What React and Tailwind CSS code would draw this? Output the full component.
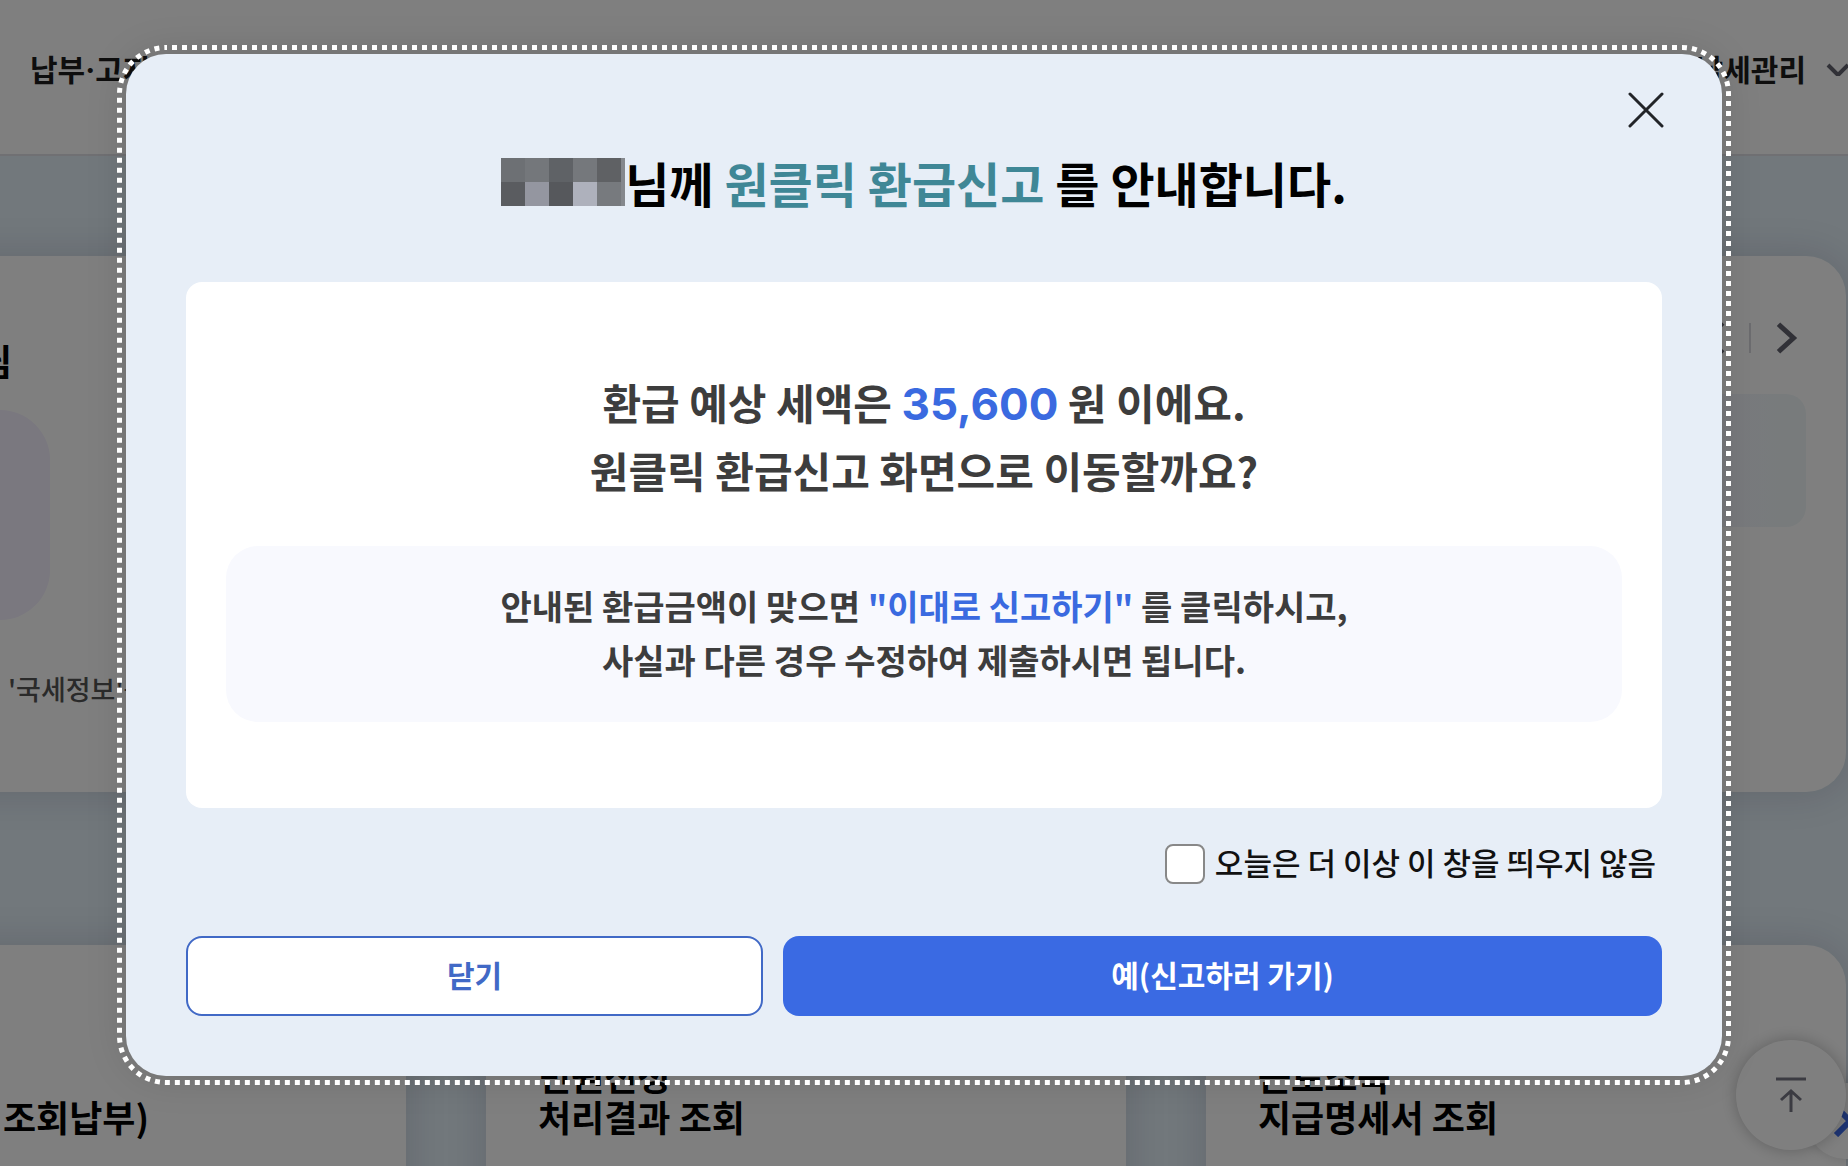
import { useState } from 'react'

const CARD = 'bg-white rounded-[40px] shadow-[0_0_40px_rgba(30,20,60,0.16)]'

const services = [
  { id: 'pay', lines: ['조회납부)'], className: 'pl-[237px] pt-[151px]' },
  { id: 'civil', lines: ['민원신청', '처리결과 조회'], className: 'pl-[52px] pt-[110px]' },
  { id: 'income', lines: ['근로소득', '지급명세서 조회'], className: 'pl-[52px] pt-[110px]' },
]

function Chevron({ d, className, strokeWidth = 4 }) {
  return (
    <svg viewBox="0 0 24 32" className={className} fill="none" stroke="currentColor" strokeWidth={strokeWidth} aria-hidden="true">
      <path d={d} />
    </svg>
  )
}

function Header() {
  return (
    <header className="flex h-[156px] items-start justify-between border-b-2 border-[#e0e0e6] bg-white pt-[46px] pl-[30px] text-[30px] leading-[44px] font-bold text-[#1c1c1c]">
      <a href="#pay">납부<span className="font-['Inter',sans-serif]">·</span>고지<span className="font-['Inter',sans-serif]">·</span>환급</a>
      <a href="#manage" className="flex items-center">
        납세관리
        <svg viewBox="0 0 24 16" className="-mr-[2px] ml-[20px] h-4 w-6 text-[#62636f]" fill="none" stroke="currentColor" strokeWidth="4" aria-hidden="true">
          <path d="M2 5 L12 15 L22 5" />
        </svg>
      </a>
    </header>
  )
}

function Background() {
  return (
    <div className="h-screen overflow-hidden bg-[#e4f0f8]">
      <Header />
      <main className="flex justify-end pt-[100px] pr-[2px]">
        <div className="flex w-[2080px] shrink-0 flex-col gap-[153px]">
          <section className="flex h-[536px] gap-20">
            <div className={`${CARD} flex-1`}>
              <p className="w-[246px] pt-[77px] text-right text-[36px] leading-[54px] font-bold">님</p>
              <div className="mt-[23px] h-[210px] w-[284px] rounded-[50px] bg-[#f4f0fe]"></div>
              <p className="mt-[49px] pl-[242px] text-[27px] leading-[40px] font-medium text-[#555]">'국세정보'를</p>
            </div>
            <div className={`${CARD} flex-1 px-[40px] pt-[62px]`}>
              <div className="flex items-center justify-end pr-1 text-[#62636f]">
                <button type="button" aria-label="이전"><Chevron d="M19 4 L6 16 L19 28" className="h-10 w-8" /></button>
                <span className="mx-[19px] h-[30px] w-[2px] bg-[#d8d8de]"></span>
                <button type="button" aria-label="다음"><Chevron d="M6 5 L18 16 L6 27" className="h-10 w-8" /></button>
              </div>
              <div className="mt-[36px] h-[133px] rounded-[20px] bg-linear-to-r from-[#f4f3fe] from-85% to-[#f0f7f8]"></div>
            </div>
          </section>
          <section className="grid grid-cols-3 gap-20">
            {services.map(s => (
              <a key={s.id} href={`#${s.id}`} className={`${CARD} ${s.className} h-[320px] text-[36px] leading-[41px] font-bold`}>
                {s.lines.map(l => <span key={l} className="block">{l}</span>)}
              </a>
            ))}
          </section>
        </div>
      </main>

      {/* Floating buttons */}
      <button type="button" aria-label="다음 서비스" className="absolute right-[-35px] bottom-[7px] flex h-[76px] w-[76px] items-center justify-center rounded-full bg-white text-[#3d6be8] shadow-[0_0_12px_rgba(0,0,0,0.15)]">
        <Chevron d="M3 2 L17 16 L3 30" strokeWidth={6} className="h-8 w-6" />
      </button>
      <button type="button" aria-label="맨 위로" className="absolute right-[2px] bottom-[16px] flex h-[110px] w-[110px] items-center justify-center rounded-full bg-white text-[#777784] shadow-[0_0_16px_rgba(0,0,0,0.25)]">
        <svg viewBox="0 0 32 36" className="h-9 w-8" fill="none" stroke="currentColor" strokeWidth="3" aria-hidden="true">
          <path d="M1 2 H31 M16 35 V14 M6 23 L16 14 L26 23" />
        </svg>
      </button>
    </div>
  )
}

// Dotted ring drawn just outside the dialog
function FocusRing() {
  return (
    <svg className="pointer-events-none absolute -top-[9px] -left-[9px] h-[calc(100%+18px)] w-[calc(100%+18px)]" aria-hidden="true">
      <rect
        x="2.5"
        y="2.5"
        rx="46.5"
        className="h-[calc(100%-5px)] w-[calc(100%-5px)]"
        fill="none"
        stroke="#fff"
        strokeWidth="5"
        strokeDasharray="5 5"
        strokeDashoffset="4"
      />
    </svg>
  )
}

function HiddenName() {
  const cells = ['#6d7074', '#74777b', '#5f6266', '#75787c', '#5f6164', '#5a5c60', '#9496a0', '#56585c', '#aeb1bc', '#777a7e']
  return (
    <svg viewBox="0 0 124 48" className="h-12 w-[124px]" shapeRendering="crispEdges" aria-hidden="true">
      <rect width="124" height="48" fill="#85888d" />
      {cells.map((c, i) => (
        <rect key={i} x={(i % 5) * 24} y={i < 5 ? 0 : 24} width="24" height="24" fill={c} />
      ))}
    </svg>
  )
}

export default function App() {
  const [hideToday, setHideToday] = useState(false)

  return (
    <div className="relative overflow-hidden font-['Noto_Sans_CJK_KR',sans-serif]">
      <Background />

      <div className="absolute inset-0 flex items-start justify-center bg-black/50 px-[126px] pt-[54px]">
        <div
          role="dialog"
          aria-modal="true"
          aria-labelledby="refund-title"
          className="relative w-full rounded-[40px] bg-[#e7eef7] px-[60px] pt-[88px] pb-[60px] shadow-[0_0_40px_rgba(0,0,0,0.15)]"
        >
          <FocusRing />
          <button type="button" aria-label="닫기" className="absolute top-[38px] right-[58px] p-0">
            <svg viewBox="0 0 36 36" className="h-9 w-9" fill="none" stroke="#222428" strokeWidth="3" strokeLinecap="round" aria-hidden="true">
              <path d="M2 2 L34 34 M34 2 L2 34" />
            </svg>
          </button>

          <h1 id="refund-title" className="flex items-center justify-center text-[48px] leading-[80px] font-bold text-black">
            <HiddenName />
            <span>님께 <span className="text-[#3f8796]">원클릭 환급신고</span> 를 안내합니다.</span>
          </h1>

          <div className="mt-[60px] rounded-2xl bg-white px-10 pt-[86px] pb-[86px] text-center font-bold text-[#3d3d3d]">
            <p className="text-[42px] leading-[68px]">
              환급 예상 세액은 <strong className="font-['Inter',sans-serif] text-[44px] leading-none font-bold text-[#3a6ae0]">35,600</strong> 원 이에요.
              <br />
              원클릭 환급신고 화면으로 이동할까요?
            </p>
            <p className="mt-[42px] rounded-[32px] bg-[#f8f9fe] pt-[33px] pb-[35px] text-[34px] leading-[54px]">
              안내된 환급금액이 맞으면 <span className="text-[#3a6ae0]">"이대로 신고하기"</span> 를 클릭하시고,
              <br />
              사실과 다른 경우 수정하여 제출하시면 됩니다.
            </p>
          </div>

          <div className="mt-[36px] flex items-center justify-end pr-[6px]">
            <input
              id="hide-today"
              type="checkbox"
              checked={hideToday}
              onChange={e => setHideToday(e.target.checked)}
              className="h-10 w-10 appearance-none rounded-lg border-2 border-[#888] bg-white checked:bg-[#3a6ae3]"
            />
            <label htmlFor="hide-today" className="pb-1 pl-[10px] text-[31px] leading-[36px] font-medium text-[#111]">
              오늘은 더 이상 이 창을 띄우지 않음
            </label>
          </div>

          <div className="mt-[52px] flex gap-5 text-[30px] font-bold">
            <button type="button" className="h-20 w-[39.1%] rounded-2xl border-2 border-[#4169c6] bg-white pb-1 text-[#4169c6]">닫기</button>
            <button type="button" className="h-20 flex-1 rounded-2xl bg-[#3a6ae3] pb-1 text-white">예(신고하러 가기)</button>
          </div>
        </div>
      </div>
    </div>
  )
}
